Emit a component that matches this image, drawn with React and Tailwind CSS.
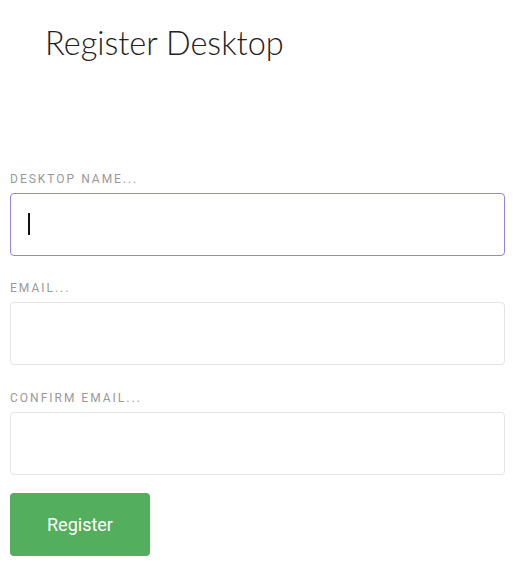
import React, { useState } from "react";

const fields = [
  { id: "name", label: "DESKTOP NAME...", focused: true, gap: "mb-[26px]" },
  { id: "email", label: "EMAIL...", gap: "mb-[27px]" },
  { id: "confirm", label: "CONFIRM EMAIL...", gap: "mb-[18px]" },
];

const RegisterDesktop = () => {
  const [values, setValues] = useState({ name: "", email: "", confirm: "" });

  return (
    <div className="w-[523px] h-[577px] bg-white px-[10px] pt-[25px]">
      <h1 className="pl-[35px] text-[32.5px] leading-[36px] font-light text-[#222] font-['Lato',sans-serif]">
        Register Desktop
      </h1>

      <form className="mt-[112px]" onSubmit={(e) => e.preventDefault()}>
        {fields.map((f) => (
          <div key={f.id} className={f.gap}>
            <label className="block h-[20px] text-[12px] leading-[12px] tracking-[2px] text-[#999] font-['Roboto',sans-serif]">
              {f.label}
            </label>
            <div className="relative">
              <input
                type="text"
                value={values[f.id]}
                onChange={(e) => setValues({ ...values, [f.id]: e.target.value })}
                className={`block w-[495px] h-[63px] rounded-[4px] border bg-white px-[18px] text-[22px] outline-none font-['Roboto',sans-serif] ${
                  f.focused ? "border-[#9583e0]" : "border-[#e4e4e4]"
                }`}
              />
              {f.focused && (
                <span className="absolute left-[18px] top-[20px] w-[2px] h-[22px] bg-[#111]" />
              )}
            </div>
          </div>
        ))}

        <button
          type="submit"
          className="w-[140px] h-[63px] rounded-[4px] bg-[#53af5e] text-white text-[18px] font-normal font-['Roboto',sans-serif]"
        >
          Register
        </button>
      </form>
    </div>
  );
};

export default RegisterDesktop;
